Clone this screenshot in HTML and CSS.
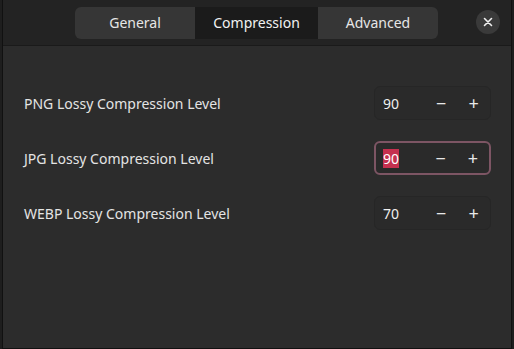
FILE: index.html
```html
<!DOCTYPE html>
<html>
<head>
  <meta charset="UTF-8">
  <title>Preferences</title>
  <link rel="stylesheet" href="styles.css">
</head>
<body>
  <div class="window">
    <div class="header">
      <div class="tabs">
        <div class="tab">General</div>
        <div class="tab active">Compression</div>
        <div class="tab">Advanced</div>
      </div>
      <div class="close">
        <svg width="10" height="10" viewBox="0 0 10 10">
          <path d="M1.5 1.5 L8.5 8.5 M8.5 1.5 L1.5 8.5" stroke="#f0f0f0" stroke-width="1.6" stroke-linecap="round"/>
        </svg>
      </div>
    </div>

    <div class="content">
      <div class="row">
        <span class="label">PNG Lossy Compression Level</span>
        <div class="spin">
          <span class="value">90</span>
          <span class="btn">&minus;</span>
          <span class="btn">+</span>
        </div>
      </div>
      <div class="row">
        <span class="label">JPG Lossy Compression Level</span>
        <div class="spin focused">
          <span class="value"><span class="sel">90</span></span>
          <span class="btn">&minus;</span>
          <span class="btn">+</span>
        </div>
      </div>
      <div class="row">
        <span class="label">WEBP Lossy Compression Level</span>
        <div class="spin">
          <span class="value">70</span>
          <span class="btn">&minus;</span>
          <span class="btn">+</span>
        </div>
      </div>
    </div>
  </div>
</body>
</html>
```

FILE: styles.css
```css
html, body {
  margin: 0;
  height: 100%;
  background: #1e1e1e;
}
body {
  font-family: 'Noto Sans', 'Open Sans', sans-serif;
  color: #e8e8e8;
  font-size: 13px;
  padding: 0 2px 1px 2px;
  box-sizing: border-box;
}
.window {
  height: 100%;
  display: flex;
  flex-direction: column;
  background: #2c2c2c;
  border-left: 1px solid #111;
  border-right: 1px solid #111;
  border-bottom: 1px solid #111;
}
.header {
  height: 45px;
  background: #232323;
  border-bottom: 1px solid #1a1a1a;
  display: flex;
  align-items: center;
  position: relative;
}
.tabs {
  display: flex;
  margin-left: 72px;
  height: 32px;
  background: #363636;
  border-radius: 6px;
  overflow: hidden;
}
.tab {
  display: flex;
  align-items: center;
  justify-content: center;
  font-size: 14px;
  color: #e6e6e6;
}
.tab:nth-child(1) { width: 120px; }
.tab:nth-child(2) { width: 123px; }
.tab:nth-child(3) { width: 120px; }
.tab.active {
  background: #1b1b1b;
  color: #f2f2f2;
}
.close {
  position: absolute;
  right: 11px;
  top: 10px;
  width: 24px;
  height: 24px;
  border-radius: 50%;
  background: #3a3a3a;
  display: flex;
  align-items: center;
  justify-content: center;
}
.content {
  padding: 40px 20px 0 21px;
  display: flex;
  flex-direction: column;
  gap: 21px;
}
.row {
  display: flex;
  align-items: center;
  justify-content: space-between;
}
.label {
  font-size: 14px;
  color: #e4e4e4;
}
.spin {
  width: 117px;
  height: 34px;
  box-sizing: border-box;
  border: 1px solid #262626;
  background: #2a2a2a;
  border-radius: 6px;
  display: flex;
  align-items: center;
  font-size: 14px;
}
.spin.focused {
  border: 2px solid #7d5564;
}
.value {
  width: 45px;
  padding-left: 8px;
  color: #f0f0f0;
}
.spin.focused .value {
  padding-left: 7px;
}
.sel {
  background: #c5304f;
  color: #fff;
}
.btn {
  width: 35px;
  text-align: center;
  font-size: 18px;
  color: #e8e8e8;
}
```
